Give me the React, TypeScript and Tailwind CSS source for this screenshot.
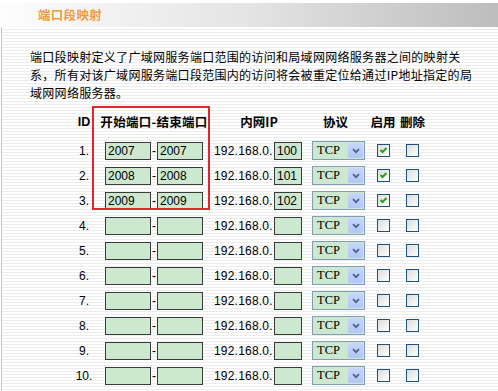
import React from "react";

type Row = { id: number; start: string; end: string; ip: string; enabled: boolean };

const rows: Row[] = [
  { id: 1, start: "2007", end: "2007", ip: "100", enabled: true },
  { id: 2, start: "2008", end: "2008", ip: "101", enabled: true },
  { id: 3, start: "2009", end: "2009", ip: "102", enabled: true },
  { id: 4, start: "", end: "", ip: "", enabled: false },
  { id: 5, start: "", end: "", ip: "", enabled: false },
  { id: 6, start: "", end: "", ip: "", enabled: false },
  { id: 7, start: "", end: "", ip: "", enabled: false },
  { id: 8, start: "", end: "", ip: "", enabled: false },
  { id: 9, start: "", end: "", ip: "", enabled: false },
  { id: 10, start: "", end: "", ip: "", enabled: false },
];

const inputCls =
  "h-[18px] border border-[#3a3a3a] bg-[#cce8cf] px-[2px] text-[12px] text-black font-['Liberation_Sans',sans-serif] outline-none";

function Check({ checked }: { checked: boolean }) {
  return (
    <span className="w-[13px] h-[13px] border border-[#1c5180] bg-gradient-to-br from-[#dcdcd7] to-white flex items-center justify-center">
      {checked && (
        <svg width="11" height="11" viewBox="0 0 11 11">
          <path d="M2.5 5 L4.5 7 L8.5 3" stroke="#21a121" strokeWidth="2" fill="none" />
        </svg>
      )}
    </span>
  );
}

function ProtoSelect() {
  return (
    <div className="w-[53px] h-[19px] border border-[#7f9db9] bg-[#cce8cf] flex items-center">
      <span className="flex-1 pl-[4px] text-[12.5px] text-black font-['Liberation_Serif',serif]">TCP</span>
      <span className="w-[15px] h-[15px] mr-[1px] rounded-[2px] bg-gradient-to-b from-[#c6d6fb] to-[#b2c6f5] flex items-center justify-center">
        <svg width="8" height="6" viewBox="0 0 8 6">
          <path d="M1 1.2 L4 4.2 L7 1.2" stroke="#4d6185" strokeWidth="1.7" fill="none" />
        </svg>
      </span>
    </div>
  );
}

export default function App() {
  const cols = "grid grid-cols-[26px_114px_96px_63px_26px_33px]";

  return (
    <div className="w-[498px] h-[391px] overflow-hidden bg-white font-['Noto_Sans_CJK_SC',sans-serif] text-black">
      <div className="pt-[3px]">
        {/* title bar */}
        <div className="h-[24px] bg-gradient-to-r from-[#fdfdfd] via-[#e4e4e4] to-[#bdbdbd] flex items-center pl-[38px]">
          <span className="text-[12.5px] font-bold text-[#f39a3c] tracking-[0.3px]">端口段映射</span>
        </div>

        <div className="ml-[1px] border-l border-[#c8c8c8] h-[364px] bg-[repeating-linear-gradient(to_bottom,#ffffff_0px,#ffffff_2px,#ececec_2px,#ececec_3px)]">
          <p className="pt-[21px] pl-[28px] text-[12px] leading-[18px] tracking-[0.3px]">
            端口段映射定义了广域网服务端口范围的访问和局域网网络服务器之间的映射关
            <br />
            系，所有对该广域网服务端口段范围内的访问将会被重定位给通过IP地址指定的局
            <br />
            域网网络服务器。
          </p>

          <div className="relative mt-[5px] pl-[69px]">
            <div className={`${cols} h-[31px] items-center text-[12.5px] font-bold whitespace-nowrap`}>
              <span className="text-center font-['Liberation_Sans',sans-serif]">ID</span>
              <span className="flex justify-center tracking-[0.3px]">开始端口-结束端口</span>
              <span className="text-center">内网IP</span>
              <span className="flex justify-center pr-[6px]">协议</span>
              <span className="flex justify-center">启用</span>
              <span className="flex justify-center">删除</span>
            </div>

            {rows.map((r) => (
              <div key={r.id} className={`${cols} h-[25px] items-center text-[12px]`}>
                <span className="text-center font-['Liberation_Sans',sans-serif]">{r.id}.</span>
                <div className="flex items-center justify-center">
                  <input readOnly value={r.start} className={`${inputCls} w-[46px]`} />
                  <span className="w-[6px] text-center leading-none font-['Liberation_Sans',sans-serif]">-</span>
                  <input readOnly value={r.end} className={`${inputCls} w-[46px]`} />
                </div>
                <div className="flex items-center pl-[3px]">
                  <span className="w-[60px] font-['Liberation_Sans',sans-serif] tracking-[0.2px]">192.168.0.</span>
                  <input readOnly value={r.ip} className={`${inputCls} w-[28px]`} />
                </div>
                <div className="flex justify-center">
                  <ProtoSelect />
                </div>
                <div className="flex justify-center">
                  <Check checked={r.enabled} />
                </div>
                <div className="flex justify-center">
                  <Check checked={false} />
                </div>
              </div>
            ))}

            {/* highlight annotation */}
            <div className="absolute left-[90px] top-[-1px] w-[118px] h-[104px] border-2 border-[#e3262b] pointer-events-none" />
          </div>
        </div>
      </div>
    </div>
  );
}
